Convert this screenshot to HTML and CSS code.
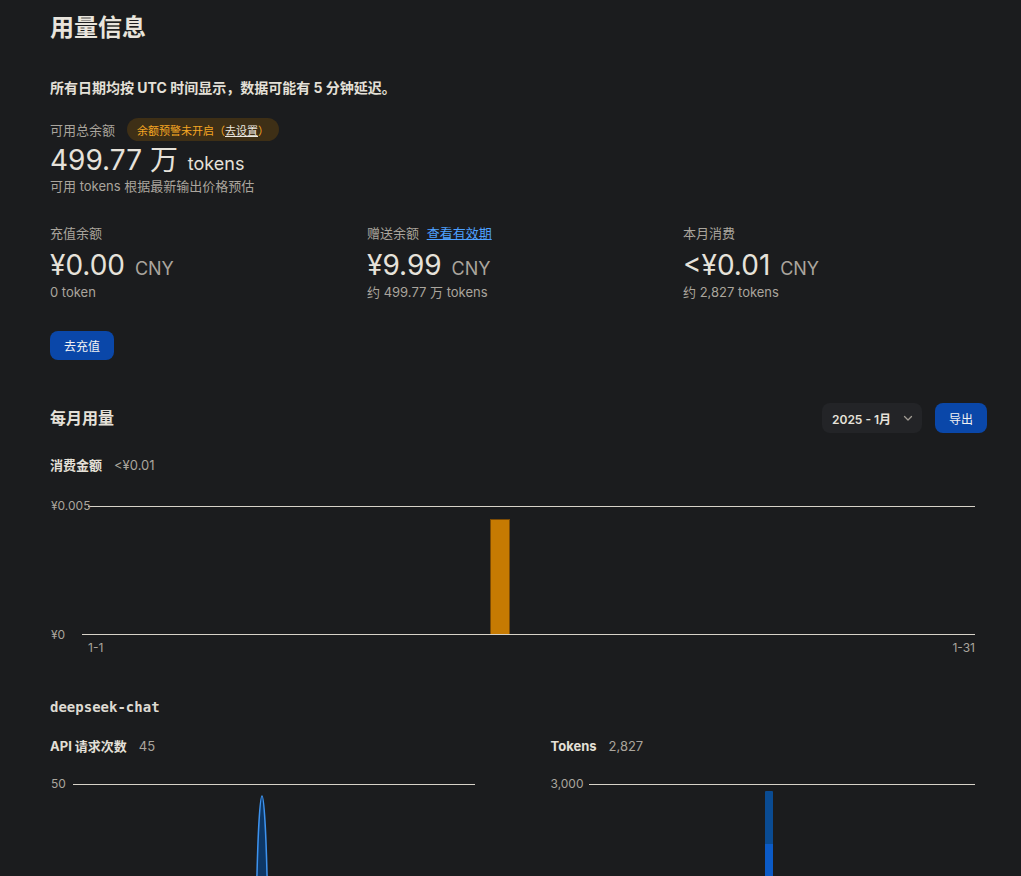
FILE: index.html
```html
<!DOCTYPE html>
<html lang="zh-CN">
<head>
<meta charset="utf-8">
<title>用量信息</title>
<link rel="stylesheet" href="styles.css">
</head>
<body>
<main class="page">
  <h1 class="title">用量信息</h1>
  <p class="notice">所有日期均按 UTC 时间显示，数据可能有 5 分钟延迟。</p>

  <section class="total">
    <div class="total-head">
      <span class="label">可用总余额</span>
      <span class="badge">余额预警未开启（<span class="badge-link">去设置</span>）</span>
    </div>
    <div class="big">499.77 万 <span class="unit">tokens</span></div>
    <div class="sub">可用 tokens 根据最新输出价格预估</div>
  </section>

  <section class="balances">
    <div class="bal">
      <div class="label">充值余额</div>
      <div class="big">¥0.00 <span class="unit gray">CNY</span></div>
      <div class="sub">0 token</div>
    </div>
    <div class="bal">
      <div class="label">赠送余额 <a class="link" href="#">查看有效期</a></div>
      <div class="big">¥9.99 <span class="unit gray">CNY</span></div>
      <div class="sub">约 499.77 万 tokens</div>
    </div>
    <div class="bal">
      <div class="label">本月消费</div>
      <div class="big">&lt;¥0.01 <span class="unit gray">CNY</span></div>
      <div class="sub">约 2,827 tokens</div>
    </div>
  </section>

  <button class="btn-primary recharge">去充值</button>

  <section class="monthly">
    <div class="monthly-head">
      <h2 class="section-title">每月用量</h2>
      <div class="controls">
        <div class="select">
          <span>2025 - 1月</span>
          <svg class="chev" width="12" height="12" viewBox="0 0 12 12"><path d="M2.5 4.5 6 8l3.5-3.5" fill="none" stroke="currentColor" stroke-width="1.3" stroke-linecap="round" stroke-linejoin="round"/></svg>
        </div>
        <button class="btn-primary export">导出</button>
      </div>
    </div>

    <div class="metric"><span class="metric-name">消费金额</span><span class="metric-val">&lt;¥0.01</span></div>

    <div class="chart cost-chart">
      <div class="plot cost-plot">
        <span class="ylab top">¥0.005</span>
        <span class="ylab bottom">¥0</span>
        <div class="bar cost-bar" style="left:408px;height:115px"></div>
      </div>
      <div class="xlabs"><span>1-1</span><span>1-31</span></div>
    </div>

    <h3 class="model">deepseek-chat</h3>

    <div class="model-grid">
      <div class="model-col">
        <div class="metric"><span class="metric-name">API 请求次数</span><span class="metric-val">45</span></div>
        <div class="chart">
          <div class="plot req-plot">
            <span class="ylab top">50</span>
            <svg class="spike" width="401" height="128" viewBox="0 0 401 128" preserveAspectRatio="none">
              <path d="M0 128 L177 128 C182 128 183 112 184 90 C185 50 187 12 189 12 C191 12 193 50 194 90 C195 112 196 128 201 128 L401 128 Z" fill="#0d3766"/>
              <path d="M0 128 L177 128 C182 128 183 112 184 90 C185 50 187 12 189 12 C191 12 193 50 194 90 C195 112 196 128 201 128 L401 128" fill="none" stroke="#3d92ee" stroke-width="1.5"/>
            </svg>
          </div>
        </div>
      </div>
      <div class="model-col">
        <div class="metric"><span class="metric-name">Tokens</span><span class="metric-val">2,827</span></div>
        <div class="chart">
          <div class="plot tok-plot">
            <span class="ylab top">3,000</span>
            <div class="stack" style="left:176px;height:121px">
              <div class="seg seg-out" style="height:53px"></div>
              <div class="seg seg-in"></div>
            </div>
          </div>
        </div>
      </div>
    </div>
  </section>
</main>
</body>
</html>
```

FILE: styles.css
```css
* { box-sizing: border-box; }

html, body {
  margin: 0;
  background: #1b1c1e;
}

body {
  color: #e4e0d8;
  font-family: Inter, "Noto Sans CJK SC", sans-serif;
  font-size: 13px;
}

.page {
  padding: 12px 34px 60px 50px;
}

.title {
  margin: 0;
  height: 32px;
  font-size: 24px;
  line-height: 32px;
  font-weight: 700;
  color: #e8e4dc;
}

.notice {
  margin: 34px 0 0;
  height: 20px;
  font-size: 14px;
  line-height: 20px;
  font-weight: 700;
}

.total { margin-top: 20px; }

.total-head {
  display: flex;
  align-items: center;
  gap: 12px;
  height: 23px;
}

.label {
  color: #aaa59d;
  font-size: 13px;
  line-height: 18px;
  height: 18px;
}

.badge {
  display: inline-flex;
  align-items: center;
  height: 23px;
  padding: 0 10px;
  border-radius: 12px;
  background: #3e2f16;
  color: #f5a623;
  font-size: 11px;
}

.badge-link {
  color: #ece8e0;
  text-decoration: underline;
}

.big {
  height: 34px;
  font-size: 28px;
  line-height: 34px;
  color: #e6e2da;
  margin-top: 2px;
  white-space: nowrap;
}

.unit {
  font-size: 18px;
  margin-left: 2px;
}

.unit.gray { color: #aaa59d; }

.sub {
  height: 18px;
  color: #aaa59d;
  font-size: 13px;
  line-height: 18px;
}

.balances {
  display: grid;
  grid-template-columns: 317px 316px 1fr;
  margin-top: 29px;
}

.bal .big { margin-top: 6px; }
.bal .sub { margin-top: 1px; }

.link {
  color: #4ea1ff;
  text-decoration: underline;
  margin-left: 4px;
}

.btn-primary {
  border: 0;
  background: #0a47a9;
  color: #f2f2f2;
  font-family: inherit;
  font-size: 12px;
  border-radius: 8px;
  cursor: pointer;
}

.recharge {
  display: block;
  margin-top: 30px;
  height: 29px;
  width: 64px;
  padding: 0;
}

.monthly { margin-top: 43px; }

.monthly-head {
  display: flex;
  align-items: center;
  justify-content: space-between;
  height: 30px;
}

.section-title {
  margin: 0;
  font-size: 16px;
  line-height: 22px;
  font-weight: 700;
}

.controls {
  display: flex;
  align-items: center;
  gap: 13px;
}

.select {
  display: flex;
  align-items: center;
  justify-content: space-between;
  width: 100px;
  height: 30px;
  padding: 0 8px 0 10px;
  border-radius: 8px;
  background: #232427;
  font-size: 12px;
  font-weight: 600;
  color: #e6e2da;
}

.chev { color: #a09b93; }

.export {
  width: 52px;
  height: 30px;
  padding: 0;
}

.metric {
  display: flex;
  align-items: center;
  gap: 12px;
  margin-top: 23px;
  height: 18px;
  line-height: 18px;
}

.metric-name {
  font-weight: 700;
  font-size: 13px;
}

.metric-val {
  color: #aaa59d;
  font-size: 13px;
}

.chart {
  padding-right: 12px;
}

.plot {
  position: relative;
  border-top: 1px solid #d7d2c8;
}

.ylab {
  position: absolute;
  top: -8px;
  font-size: 12px;
  line-height: 14px;
  color: #aaa59d;
  white-space: nowrap;
}

.cost-plot {
  margin: 32px 0 0 32px;
  height: 129px;
  border-top: 0;
  border-bottom: 1px solid #d7d2c8;
}

.cost-plot::before {
  content: "";
  position: absolute;
  left: 6px;
  right: 0;
  top: 0;
  border-top: 1px solid #d7d2c8;
}

.cost-plot .ylab.top { left: -31px; top: -7px; }
.cost-plot .ylab.bottom { left: -31px; bottom: -8px; top: auto; }

.bar {
  position: absolute;
  bottom: 0;
}

.cost-bar {
  width: 20px;
  background: #c67a02;
  border: 1px solid #7a4a05;
  border-bottom: 0;
}

.xlabs {
  display: flex;
  justify-content: space-between;
  padding-left: 38px;
  margin-top: 6px;
  font-size: 12px;
  line-height: 14px;
  color: #aaa59d;
}

.model {
  margin: 43px 0 0;
  height: 18px;
  font-family: "DejaVu Sans Mono", monospace;
  font-size: 14px;
  line-height: 18px;
  font-weight: 600;
  color: #dedad2;
}

.model-grid {
  display: grid;
  grid-template-columns: 1fr 1fr;
  column-gap: 64px;
}

.model-col .metric { margin-top: 21px; }

.req-plot {
  margin: 29px 0 0 23px;
  height: 128px;
}

.req-plot .ylab.top { left: -22px; }

.spike {
  display: block;
  margin-top: -1px;
}

.tok-plot {
  margin: 29px 0 0 38px;
  height: 128px;
}

.tok-plot .ylab.top { left: -38px; }

.stack {
  position: absolute;
  bottom: 0;
  width: 8px;
  display: flex;
  flex-direction: column;
  border-radius: 1px 1px 0 0;
  overflow: hidden;
}

.seg-out { background: #0a4b92; }
.seg-in { flex: 1; background: #0b5ac6; }
```
